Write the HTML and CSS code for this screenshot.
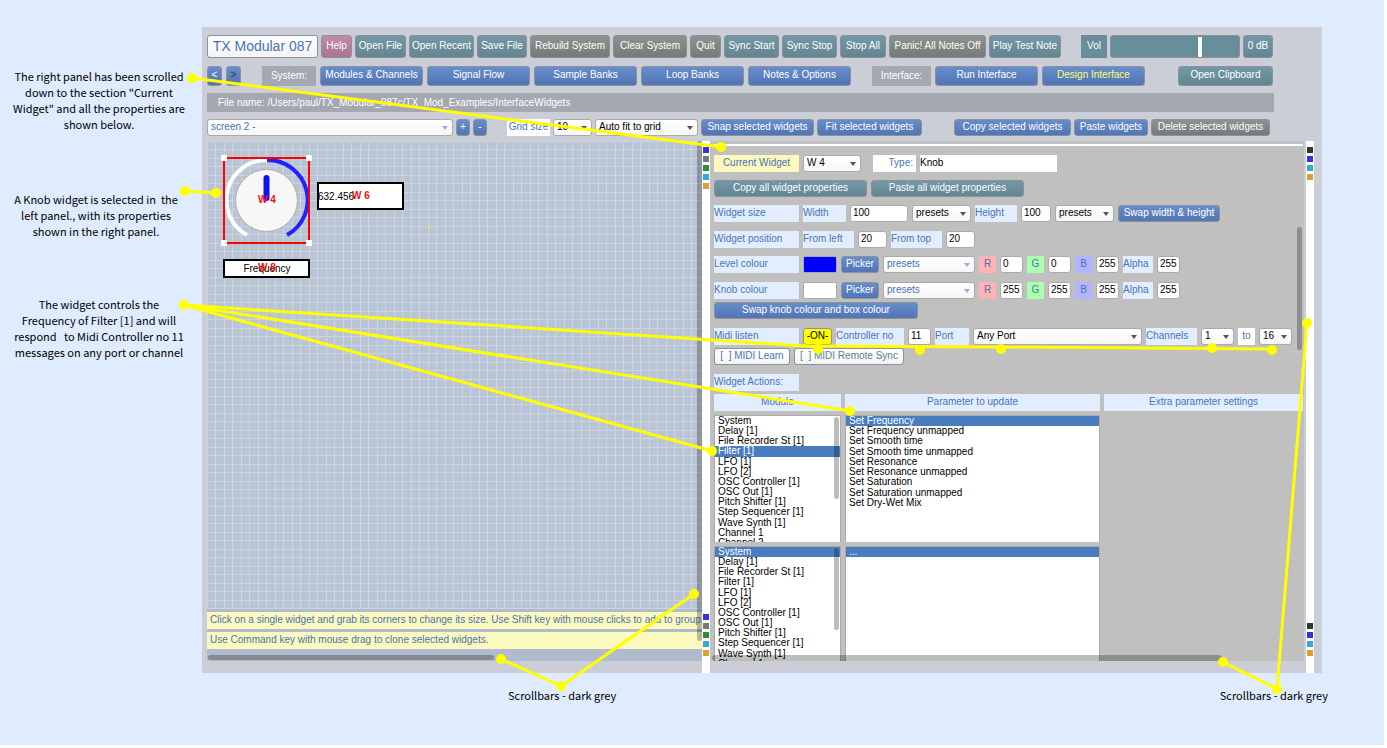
FILE: index.html
```html
<!DOCTYPE html>
<html lang="en">
<head>
<meta charset="utf-8">
<title>TX Modular 087 - Design Interface</title>
<link rel="stylesheet" href="styles.css">
</head>
<body>
<div class="sheet">
  <div class="stage">
  <aside class="notes">
    <p>The right panel has been scrolled
down to the section "Current
Widget" and all the properties are
shown below.</p>
    <p class="note-knob">A Knob widget is selected in  the
left panel., with its properties
shown in the right panel.</p>
    <p>The widget controls the
Frequency of Filter [1] and will
respond   to Midi Controller no 11
messages on any port or channel</p>
  </aside>

  <main class="app">
    <header class="bars">
      <div class="bar bar-main">
        <button class="btn title w111">TX Modular 087</button>
        <button class="btn pink w31">Help</button>
        <button class="btn teal w51">Open File</button>
        <button class="btn teal w65">Open Recent</button>
        <button class="btn teal w50">Save File</button>
        <button class="btn grey w80">Rebuild System</button>
        <button class="btn grey w74">Clear System</button>
        <button class="btn grey w31">Quit</button>
        <button class="btn teal w55">Sync Start</button>
        <button class="btn teal w55">Sync Stop</button>
        <button class="btn teal w46">Stop All</button>
        <button class="btn grey w97">Panic! All Notes Off</button>
        <button class="btn teal w72">Play Test Note</button>
        <label class="vol push" for="vol">Vol</label>
        <input class="slider" id="vol" type="range" min="0" max="100" value="70">
        <button class="btn teal w30">0 dB</button>
      </div>
      <div class="bar bar-nav">
        <button class="btn blue w15">&lt;</button>
        <button class="btn blue dim w15">&gt;</button>
        <span class="tag push w54">System:</span>
        <button class="btn blue w103">Modules &amp; Channels</button>
        <button class="btn blue w103">Signal Flow</button>
        <button class="btn blue w103">Sample Banks</button>
        <button class="btn blue w103">Loop Banks</button>
        <button class="btn blue w103">Notes &amp; Options</button>
        <span class="tag push w59">Interface:</span>
        <button class="btn blue w103">Run Interface</button>
        <button class="btn blue current w103">Design Interface</button>
        <button class="btn teal far w95">Open Clipboard</button>
      </div>
      <div class="path">File name: /Users/paul/TX_Modular_087c/TX_Mod_Examples/InterfaceWidgets</div>
      <div class="bar bar-edit">
        <span class="pick soft w246"><select aria-label="Screen"><option>screen 2 -</option></select></span>
        <button class="btn blue w14">+</button>
        <button class="btn blue w14">-</button>
        <label class="lab white push w43" for="grid">Grid size</label>
        <span class="pick w39"><select id="grid"><option>10</option></select></span>
        <span class="pick w103"><select aria-label="Fit mode"><option>Auto fit to grid</option></select></span>
        <button class="btn blue w113">Snap selected widgets</button>
        <button class="btn blue w105">Fit selected widgets</button>
        <button class="btn blue far w117">Copy selected widgets</button>
        <button class="btn blue w74">Paste widgets</button>
        <button class="btn grey w119">Delete selected widgets</button>
      </div>
    </header>

    <div class="work">
      <section class="canvas">
        <div class="grid">
          <svg class="widgets" width="240" height="150" viewBox="0 0 240 150">
            <path d="M40 94 A40 40 0 0 1 60 19" fill="none" stroke="#fff" stroke-width="4"/>
            <path d="M60 19 A40 40 0 0 1 80 94" fill="none" stroke="#2222ff" stroke-width="4"/>
            <circle cx="59.500" cy="59.500" r="31" fill="#f7f7f7" stroke="#aaa"/>
            <path d="M59.500 37 V57" stroke="#1010f0" stroke-width="6" stroke-linecap="round"/>
            <rect x="17" y="17" width="85" height="85" fill="none" stroke="#f00" stroke-width="2"/>
            <path d="M14 14h6v6h-6z M99 14h6v6h-6z M14 99h6v6h-6z M99 99h6v6h-6z" fill="#fff"/>
            <rect x="111" y="42" width="85" height="26" fill="#fff" stroke="#000" stroke-width="2"/>
            <rect x="17" y="119" width="85" height="17" fill="#fff" stroke="#000" stroke-width="2"/>
            <text x="111" y="59">632.456</text>
            <text x="60" y="131" text-anchor="middle">Frequency</text>
            <g class="ids" text-anchor="middle">
              <text x="60" y="62">W 4</text>
              <text x="154" y="58">W 6</text>
              <text x="60" y="130">W 8</text>
            </g>
          </svg>
        </div>
        <p class="hint">Click on a single widget and grab its corners to change its size. Use Shift key with mouse clicks to add to group.</p>
        <p class="hint">Use Command key with mouse drag to clone selected widgets.</p>
        <i class="thumb canvas-x"></i>
        <i class="thumb canvas-y"></i>
      </section>

      <div class="strip">
        <div class="dots"><i class="c-blue"></i><i class="c-grey"></i><i class="c-green"></i><i class="c-cyan"></i><i class="c-gold"></i></div>
        <div class="dots"><i class="c-blue"></i><i class="c-grey"></i><i class="c-green"></i><i class="c-cyan"></i><i class="c-gold"></i></div>
      </div>

      <section class="props">
        <div class="row wide">
          <label class="lab yellow w85" for="cur">Current Widget</label>
          <span class="pick w58"><select id="cur"><option>W 4</option></select></span>
          <label class="lab white right indent w43" for="type">Type:</label>
          <input class="flat w137" id="type" value="Knob">
        </div>
        <div class="row">
          <button class="btn teal w153">Copy all widget properties</button>
          <button class="btn teal w153">Paste all widget properties</button>
        </div>
        <div class="row">
          <span class="lab w85">Widget size</span>
          <label class="lab w43" for="width">Width</label>
          <input class="box w58" id="width" value="100">
          <span class="pick w59"><select aria-label="Width presets"><option>presets</option></select></span>
          <label class="lab w42" for="height">Height</label>
          <input class="box w30" id="height" value="100">
          <span class="pick w59"><select aria-label="Height presets"><option>presets</option></select></span>
          <button class="btn blue w102">Swap width &amp; height</button>
        </div>
        <div class="row wide">
          <span class="lab w85">Widget position</span>
          <label class="lab w51" for="left">From left</label>
          <input class="box w29" id="left" value="20">
          <label class="lab w51" for="top">From top</label>
          <input class="box w29" id="top" value="20">
        </div>
        <div class="row">
          <span class="lab w85">Level colour</span>
          <span class="swatch level"></span>
          <button class="btn blue w38">Picker</button>
          <span class="pick soft w92"><select aria-label="Level colour presets"><option>presets</option></select></span>
          <label class="lab mid red w17" for="lr">R</label><input class="box w23" id="lr" value="0">
          <label class="lab mid green w17" for="lg">G</label><input class="box w23" id="lg" value="0">
          <label class="lab mid violet w17" for="lb">B</label><input class="box w23" id="lb" value="255">
          <label class="lab w30" for="la">Alpha</label><input class="box w23" id="la" value="255">
        </div>
        <div class="row wide">
          <span class="lab w85">Knob colour</span>
          <span class="swatch"></span>
          <button class="btn blue w38">Picker</button>
          <span class="pick soft w92"><select aria-label="Knob colour presets"><option>presets</option></select></span>
          <label class="lab mid red w17" for="kr">R</label><input class="box w23" id="kr" value="255">
          <label class="lab mid green w17" for="kg">G</label><input class="box w23" id="kg" value="255">
          <label class="lab mid violet w17" for="kb">B</label><input class="box w23" id="kb" value="255">
          <label class="lab w30" for="ka">Alpha</label><input class="box w23" id="ka" value="255">
        </div>
        <div class="row tight">
          <button class="btn blue w204">Swap knob colour and box colour</button>
        </div>
        <div class="row wide">
          <span class="lab w85">Midi listen</span>
          <button class="btn on w29">-ON-</button>
          <label class="lab w68" for="ctl">Controller no</label>
          <input class="box w23" id="ctl" value="11">
          <label class="lab w34" for="port">Port</label>
          <span class="pick w169"><select id="port"><option>Any Port</option></select></span>
          <label class="lab w51" for="ch1">Channels</label>
          <span class="pick w33"><select id="ch1"><option>1</option></select></span>
          <label class="lab white mid w17" for="ch2">to</label>
          <span class="pick w33"><select id="ch2"><option>16</option></select></span>
        </div>
        <div class="row tight">
          <button class="btn plain w76">[&nbsp; ] MIDI Learn</button>
          <button class="btn plain sync w110">[&nbsp; ] MIDI Remote Sync</button>
        </div>
        <div class="row wide"><span class="lab w85">Widget Actions:</span></div>
        <div class="actions">
          <div class="lab mid">Module</div>
          <div class="lab mid">Parameter to update</div>
          <div class="lab mid">Extra parameter settings</div>
          <div class="list">
            <ul class="rows13" role="listbox" aria-label="Module 1">
              <li role="option">System</li><li role="option">Delay [1]</li><li role="option">File Recorder St [1]</li><li role="option" aria-selected="true">Filter [1]</li><li role="option">LFO [1]</li><li role="option">LFO [2]</li><li role="option">OSC Controller [1]</li><li role="option">OSC Out [1]</li><li role="option">Pitch Shifter [1]</li><li role="option">Step Sequencer [1]</li><li role="option">Wave Synth [1]</li><li role="option">Channel 1</li><li role="option">Channel 2</li>
            </ul>
            <i class="thumb list-y"></i>
          </div>
          <div class="list">
            <ul class="rows9" role="listbox" aria-label="Parameter 1">
              <li role="option" aria-selected="true">Set Frequency</li><li role="option">Set Frequency unmapped</li><li role="option">Set Smooth time</li><li role="option">Set Smooth time unmapped</li><li role="option">Set Resonance</li><li role="option">Set Resonance unmapped</li><li role="option">Set Saturation</li><li role="option">Set Saturation unmapped</li><li role="option">Set Dry-Wet Mix</li>
            </ul>
          </div>
          <div></div>
          <div class="list">
            <ul class="rows13" role="listbox" aria-label="Module 2">
              <li role="option" aria-selected="true">System</li><li role="option">Delay [1]</li><li role="option">File Recorder St [1]</li><li role="option">Filter [1]</li><li role="option">LFO [1]</li><li role="option">LFO [2]</li><li role="option">OSC Controller [1]</li><li role="option">OSC Out [1]</li><li role="option">Pitch Shifter [1]</li><li role="option">Step Sequencer [1]</li><li role="option">Wave Synth [1]</li><li role="option">Channel 1</li><li role="option">Channel 2</li>
            </ul>
            <i class="thumb list-y"></i>
          </div>
          <div class="list">
            <ul role="listbox" aria-label="Parameter 2"><li role="option" aria-selected="true">...</li></ul>
          </div>
        </div>
        <i class="thumb props-x"></i>
        <i class="thumb props-y"></i>
      </section>

      <div class="strip outer">
        <div class="dots"><i class="c-dark"></i><i class="c-blue"></i><i class="c-cyan"></i><i class="c-gold"></i></div>
        <div class="dots"><i class="c-dark"></i><i class="c-blue"></i><i class="c-cyan"></i><i class="c-gold"></i></div>
      </div>
    </div>
  </main>
  </div>

  <footer class="captions">
    <p>Scrollbars - dark grey</p>
    <p>Scrollbars - dark grey</p>
  </footer>

  <svg class="callouts" width="1387" height="748" viewBox="0 0 1387 748" aria-hidden="true">
    <g fill="none" stroke="#ff0" stroke-width="3">
      <path d="M192 78 L721 147"/>
      <path d="M185 191 L216 193"/>
      <path d="M184 305 L818 347"/>
      <path d="M803 346 L1001 347 L1272 349"/>
      <path d="M184 305 L850 411"/>
      <path d="M184 305 L712 451"/>
      <path d="M501 659 L561 686 L694 594"/>
      <path d="M1223 662 L1277 689 L1307 323"/>
    </g>
    <g fill="#ff0">
      <circle cx="192" cy="78" r="5"/><circle cx="721" cy="147" r="5"/>
      <circle cx="185" cy="191" r="5"/><circle cx="216" cy="193" r="5"/>
      <circle cx="184" cy="305" r="5"/><circle cx="818" cy="349" r="5"/>
      <circle cx="920" cy="350" r="5"/><circle cx="1001" cy="349" r="5"/>
      <circle cx="1212" cy="348" r="5"/><circle cx="1272" cy="350" r="5"/>
      <circle cx="850" cy="411" r="5"/><circle cx="712" cy="451" r="5"/>
      <circle cx="501" cy="659" r="5"/><circle cx="561" cy="686" r="5"/><circle cx="694" cy="594" r="5"/>
      <circle cx="1223" cy="662" r="5"/><circle cx="1277" cy="689" r="5"/><circle cx="1307" cy="323" r="5"/>
      <circle cx="429" cy="228" r="1"/>
    </g>
  </svg>
</div>
</body>
</html>
```
FILE: styles.css
```css
* { box-sizing: border-box; }

body {
  margin: 0;
  padding: 0 3px 3px 0;
  height: 100vh;
  background: #fff;
  font: 10px/12px "Liberation Sans", Arial, sans-serif;
  color: #000;
}

p, ul { margin: 0; padding: 0; }
ul { list-style: none; }

button, input, select {
  margin: 0;
  padding: 0;
  font: inherit;
  color: inherit;
}

.sheet {
  position: relative;
  display: flex;
  flex-direction: column;
  height: 100%;
  overflow: hidden;
  background: #dfebfe;
}
.stage {
  flex: 1;
  display: flex;
  min-height: 0;
  padding-right: 62px;
}
.callouts {
  position: absolute;
  top: 0;
  left: 0;
  pointer-events: none;
}

/* Side notes */
.notes {
  flex: none;
  width: 202px;
  display: flex;
  flex-direction: column;
  gap: 57px;
  padding: 68px 4px 0 0;
}
.notes p, .captions p {
  font: 11px/16px "Noto Sans CJK SC", "Noto Sans", sans-serif;
  text-align: center;
  white-space: pre;
}
.notes .note-knob { padding: 2px 6px 0 0; }

.captions {
  flex: none;
  height: 72px;
  display: flex;
  justify-content: space-between;
  padding: 14px 56px 0 508px;
}

/* Application window */
.app {
  flex: 1;
  display: flex;
  flex-direction: column;
  min-width: 0;
  min-height: 0;
  margin-top: 27px;
  background: #cbced6;
}
.bars { padding: 8px 0 5px 5px; }
.bar { display: flex; align-items: stretch; gap: 4px; }
.bar-main { height: 23px; gap: 3px; }
.bar-nav { height: 20px; margin-top: 8px; }
.bar-edit { height: 17px; margin-top: 7px; gap: 3px; }

.push { margin-left: 17px; }
.far { margin-left: 29px; }
.indent { margin-left: 8px; }

.btn {
  flex: none;
  padding-bottom: 2px;
  border: 1px solid #8d9199;
  border-radius: 3px;
  color: #fff;
  text-align: center;
  white-space: nowrap;
}
.teal { background: linear-gradient(#7399a6, #628591); }
.blue { background: linear-gradient(#668dcc, #5275b3); }
.grey { background: linear-gradient(#8e9390, #747a77); }
.pink { background: linear-gradient(#c389aa, #a97495); }
.plain, .title { background: linear-gradient(#fff, #f3f3f3); color: #4a74b8; }
.title { font-size: 14px; }
.sync { color: #5a818e; }
.dim { color: #333a55; }
.current { color: #ffff70; }
.on { background: #ff0; color: #000; }

.vol {
  width: 26px;
  background: #688e9c;
  color: #fff;
  line-height: 22px;
  text-align: center;
}
.slider {
  appearance: none;
  width: 130px;
  border: 1px solid #8d9199;
  border-radius: 3px;
  background: #688e9c;
}
.slider::-webkit-slider-thumb {
  appearance: none;
  width: 4px;
  height: 20px;
  border-radius: 1px;
  background: #fff;
}
.tag {
  flex: none;
  background: #a4a8b0;
  color: #fff;
  line-height: 19px;
  text-align: center;
}
.path {
  margin: 7px 48px 0 0;
  padding-left: 11px;
  background: #a4a8b0;
  color: #fff;
  line-height: 19px;
}

/* Drop-downs and fields */
.pick {
  position: relative;
  flex: none;
  display: flex;
}
.pick select {
  appearance: none;
  width: 100%;
  padding: 0 0 1px 3px;
  border: 1px solid #aaa;
  border-radius: 3px;
  background: linear-gradient(#fff, #f6f6f6);
}
.pick::after {
  content: "";
  position: absolute;
  right: 5px;
  top: 7px;
  border: 3px solid transparent;
  border-top: 4px solid #555;
  border-bottom: 0;
}
.soft { color: #4a74b8; }
.soft::after { border-top-color: #94b0dc; }

.box {
  flex: none;
  padding: 0 0 1px 2px;
  border: 1px solid #aaa;
  border-radius: 3px;
  background: #fff;
}
.flat { padding-bottom: 1px; border: 0; background: #fff; }

.lab {
  flex: none;
  background: #e2eeff;
  color: #4a74b8;
  line-height: 16px;
  white-space: nowrap;
}
.yellow { background: #fbf9be; text-align: center; }
.white { background: #fff; }
.right { padding-right: 3px; text-align: right; }
.mid { text-align: center; }
.bar .lab { text-align: center; }
.red { background: #ffb3b3; }
.green { background: #acffac; }
.violet { background: #b3b3ff; }
.swatch {
  flex: none;
  width: 34px;
  border: 1px solid #aaa;
  border-radius: 2px;
  background: #fff;
}
.level { background: #00f; }

/* Work area */
.work {
  flex: 1;
  display: flex;
  min-height: 0;
  padding-left: 5px;
}
.canvas {
  position: relative;
  flex: 495 1 0;
  min-width: 0;
  display: flex;
  flex-direction: column;
  gap: 3px;
  margin-bottom: 12px;
  padding-bottom: 12px;
  overflow: hidden;
  background: #b0bbce;
}
.grid {
  flex: 1;
  min-height: 0;
  overflow: hidden;
  background:
    linear-gradient(90deg, #cdd5e1 1px, transparent 1px 8px, #cdd5e1 8px 9px, transparent 9px) 0 0 / 17px 17px,
    linear-gradient(#cdd5e1 1px, transparent 1px 8px, #cdd5e1 8px 9px, transparent 9px) 0 0 / 17px 17px,
    #b9c4d4;
}
.widgets { display: block; }
.widgets text { font-size: 10px; }
.ids { fill: #e11; font-weight: bold; }
.hint {
  flex: none;
  padding-left: 3px;
  background: #fbf9be;
  color: #4a74b0;
  line-height: 16px;
  height: 17px;
  white-space: nowrap;
}

.thumb {
  position: absolute;
  border-radius: 3px;
  background: rgba(0, 0, 0, 0.26);
}
.canvas-x { left: 1px; right: 42%; bottom: 1px; height: 5px; }
.canvas-y { right: 0; top: 0; bottom: 20px; width: 5px; }
.props-x { left: 2px; right: 82px; bottom: 0; height: 6px; }
.props-y { right: 2px; top: 86px; width: 5px; height: 123px; }
.list-y { right: 1px; top: 1px; width: 5px; height: 82px; }

.strip {
  flex: none;
  width: 8px;
  display: flex;
  flex-direction: column;
  justify-content: space-between;
  padding: 6px 1px 17px;
  background: #fff;
}
.outer { margin: 0 8px 0 2px; }
.dots { display: grid; gap: 3px; }
.dots i { height: 6px; }
.c-dark { background: #333; }
.c-blue { background: #33d; }
.c-grey { background: #777; }
.c-green { background: #2e8f2e; }
.c-cyan { background: #33aad3; }
.c-gold { background: #dd9f33; }

/* Properties panel */
.props {
  position: relative;
  flex: 589 1 0;
  min-width: 0;
  display: flex;
  flex-direction: column;
  margin-bottom: 12px;
  padding: 0 1px 0 4px;
  overflow: hidden;
  background: #c0c0c0;
}
.props::before {
  content: "";
  flex: none;
  height: 3px;
  border-bottom: 2px solid #fff;
}
.row {
  flex: none;
  display: flex;
  gap: 4px;
  height: 17px;
  margin-top: 8px;
}
.row.wide { margin-top: 9px; }
.row.tight { margin-top: 3px; }

.actions {
  flex: 1;
  min-height: 0;
  display: grid;
  grid-template: 17px 127px minmax(0, 1fr) / 127px 255px minmax(0, 1fr);
  gap: 4px;
  margin-top: 3px;
}
.list {
  position: relative;
  overflow: hidden;
  border: 1px solid #aaa;
  border-bottom: 0;
  background: #fff;
}
.list ul { display: grid; grid-auto-rows: 1fr; }
.list li { padding-left: 3px; line-height: 10px; white-space: nowrap; }
.list li[aria-selected="true"] { background: #4a7dbf; color: #fff; }
.rows13 { height: 132px; }
.rows9 { height: 92px; }

/* Control widths */
.w14 { width: 14px; }
.w15 { width: 15px; }
.w17 { width: 17px; }
.w23 { width: 23px; }
.w29 { width: 29px; }
.w30 { width: 30px; }
.w31 { width: 31px; }
.w33 { width: 33px; }
.w34 { width: 34px; }
.w38 { width: 38px; }
.w39 { width: 39px; }
.w42 { width: 42px; }
.w43 { width: 43px; }
.w46 { width: 46px; }
.w50 { width: 50px; }
.w51 { width: 51px; }
.w54 { width: 54px; }
.w55 { width: 55px; }
.w58 { width: 58px; }
.w59 { width: 59px; }
.w65 { width: 65px; }
.w68 { width: 68px; }
.w72 { width: 72px; }
.w74 { width: 74px; }
.w76 { width: 76px; }
.w80 { width: 80px; }
.w85 { width: 85px; }
.w92 { width: 92px; }
.w95 { width: 95px; }
.w97 { width: 97px; }
.w102 { width: 102px; }
.w103 { width: 103px; }
.w105 { width: 105px; }
.w110 { width: 110px; }
.w111 { width: 111px; }
.w113 { width: 113px; }
.w117 { width: 117px; }
.w119 { width: 119px; }
.w137 { width: 137px; }
.w153 { width: 153px; }
.w169 { width: 169px; }
.w204 { width: 204px; }
.w246 { width: 246px; }
```
